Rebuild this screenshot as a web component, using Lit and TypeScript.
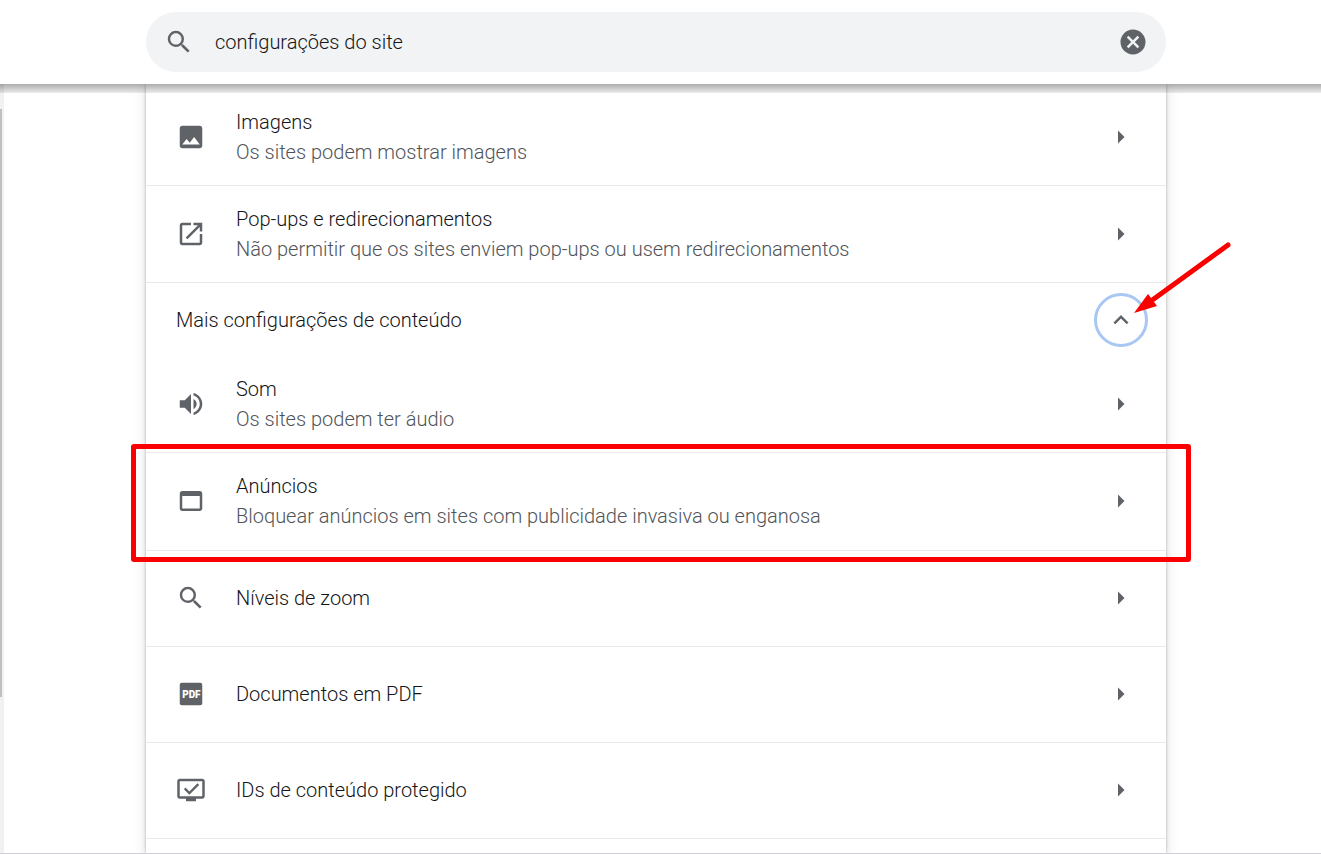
import { LitElement, html, css, svg, nothing } from "lit";
import { customElement, property, state } from "lit/decorators.js";

const ICONS = {
  search: svg`<path d="M15.5 14h-.79l-.28-.27A6.471 6.471 0 0 0 16 9.5 6.5 6.5 0 1 0 9.5 16c1.61 0 3.09-.59 4.23-1.57l.27.28v.79l5 4.99L20.49 19l-4.99-5zm-6 0C7.01 14 5 11.99 5 9.5S7.01 5 9.5 5 14 7.01 14 9.5 11.99 14 9.5 14z"/>`,
  clear: svg`<path d="M12 2a10 10 0 1 0 0 20 10 10 0 0 0 0-20zm5 13.59L15.59 17 12 13.41 8.41 17 7 15.59 10.59 12 7 8.41 8.41 7 12 10.59 15.59 7 17 8.41 13.41 12 17 15.59z"/>`,
  image: svg`<path d="M21 19V5c0-1.1-.9-2-2-2H5c-1.1 0-2 .9-2 2v14c0 1.1.9 2 2 2h14c1.1 0 2-.9 2-2zM8.5 13.5l2.5 3.01L14.5 12l4.5 6H5l3.5-4.5z"/>`,
  popup: svg`<path d="M19 19H5V5h7V3H5c-1.11 0-2 .9-2 2v14c0 1.1.89 2 2 2h14c1.1 0 2-.9 2-2v-7h-2v7zM14 3v2h3.59l-9.83 9.83 1.41 1.41L19 6.41V10h2V3h-7z"/>`,
  sound: svg`<path d="M3 9v6h4l5 5V4L7 9H3zm13.5 3A4.5 4.5 0 0 0 14 7.97v8.05c1.48-.73 2.5-2.25 2.5-4.02zM14 3.23v2.06c2.89.86 5 3.54 5 6.71s-2.11 5.85-5 6.71v2.06c4.01-.91 7-4.49 7-8.77s-2.99-7.86-7-8.77z"/>`,
  ads: svg`<path d="M19 4H5c-1.11 0-2 .9-2 2v12c0 1.1.89 2 2 2h14c1.1 0 2-.9 2-2V6c0-1.1-.89-2-2-2zm0 14H5V8h14v10z"/>`,
  pdf: svg`<rect x="3" y="3" width="18" height="18" rx="1.6"/><text class="pdf" x="12.3" y="14.8" text-anchor="middle">PDF</text>`,
  protected: svg`<path d="M21 3H3c-1.11 0-2 .89-2 2v12c0 1.1.89 2 2 2h5v2h8v-2h5c1.1 0 1.99-.9 1.99-2L23 5c0-1.11-.9-2-2-2zm0 14H3V5h18v12z"/><path d="M17.2 7.6l-6.5 6.5-3.1-3.1-1.3 1.3 4.4 4.4 7.8-7.8z" transform="translate(0 -1)"/>`,
  right: svg`<path d="M9.6 6.8L14.8 12l-5.2 5.2z"/>`,
  up: svg`<path d="M12 8l-6 6 1.41 1.41L12 10.83l4.59 4.58L18 14z"/>`,
};

type IconName = keyof typeof ICONS;

@customElement("cr-glyph")
class CrGlyph extends LitElement {
  @property() name: IconName = "search";

  static styles = css`
    :host {
      display: block;
      flex: none;
      width: 30px;
      height: 30px;
      color: #5f6368;
    }
    .glyph {
      display: block;
      width: 100%;
      height: 100%;
      fill: currentColor;
    }
    .pdf {
      font: 900 8px Roboto, "Liberation Sans", sans-serif;
      fill: #fff;
    }
  `;

  render() {
    return html`<svg class="glyph" viewBox="0 0 24 24" aria-hidden="true">${ICONS[this.name]}</svg>`;
  }
}

interface Setting {
  icon: IconName;
  label: string;
  detail?: string;
  marked?: boolean;
}

const BASIC: Setting[] = [
  { icon: "image", label: "Imagens", detail: "Os sites podem mostrar imagens" },
  {
    icon: "popup",
    label: "Pop-ups e redirecionamentos",
    detail: "Não permitir que os sites enviem pop-ups ou usem redirecionamentos",
  },
];

const MORE: Setting[] = [
  { icon: "sound", label: "Som", detail: "Os sites podem ter áudio" },
  {
    icon: "ads",
    label: "Anúncios",
    detail: "Bloquear anúncios em sites com publicidade invasiva ou enganosa",
    marked: true,
  },
  { icon: "search", label: "Níveis de zoom" },
  { icon: "pdf", label: "Documentos em PDF" },
  { icon: "protected", label: "IDs de conteúdo protegido" },
];

@customElement("app-root")
class AppRoot extends LitElement {
  @state() private expanded = true;
  @state() private query = "configurações do site";

  static styles = css`
    :host {
      display: flex;
      flex-direction: column;
      height: 100vh;
      box-sizing: border-box;
      overflow: hidden;
      border-bottom: 1px solid #d0d0d4;
      background: #fff;
      color: #141517;
      font: 350 20px/30px Roboto, "Liberation Sans", sans-serif;
    }
    * {
      box-sizing: border-box;
    }
    button {
      border: 0;
      padding: 0;
      background: none;
      color: inherit;
      font: inherit;
      text-align: left;
      cursor: pointer;
    }
    .toolbar {
      flex: none;
      padding: 12px 9px 12px 0;
    }
    .search {
      display: flex;
      align-items: center;
      max-width: 1020px;
      height: 60px;
      margin: 0 auto;
      padding: 0 18px;
      border-radius: 30px;
      background: #f1f3f4;
    }
    .query {
      flex: 1;
      min-width: 0;
      margin-left: 21px;
      padding: 0;
      border: 0;
      outline: 0;
      background: none;
      color: inherit;
      font: inherit;
    }
    .content {
      position: relative;
      display: flex;
      flex: 1;
      min-height: 0;
      overflow: hidden;
    }
    .content::before {
      content: "";
      position: absolute;
      z-index: 1;
      inset: 0 0 auto;
      height: 9px;
      background: linear-gradient(rgba(0, 0, 0, 0.32), rgba(0, 0, 0, 0.08));
    }
    .track {
      flex: none;
      width: 4px;
      padding-top: 25px;
      background: #f1f1f1;
    }
    .thumb {
      width: 2px;
      height: 79%;
      max-height: 589px;
      background: #c1c1c1;
    }
    .page {
      flex: 1;
      min-width: 0;
      padding: 0 13px 0 4px;
      margin-left: -4px;
    }
    .card {
      max-width: 1020px;
      min-height: 100%;
      margin: 0 auto;
      padding-top: 4px;
      background: #fff;
      box-shadow: 0 0 3px rgba(60, 64, 67, 0.35), 0 2px 12px rgba(60, 64, 67, 0.16);
    }
    .row {
      position: relative;
      border-top: 1px solid #e9e9ea;
    }
    .row.first {
      border-top-color: transparent;
    }
    .link {
      display: flex;
      align-items: center;
      width: 100%;
      min-height: 95px;
      padding: 0 30px 1px;
    }
    .link.two {
      min-height: 96px;
      padding-bottom: 0;
    }
    .marked .link {
      min-height: 97px;
      padding-bottom: 1px;
    }
    .text {
      display: flex;
      flex: 1;
      flex-direction: column;
      min-width: 0;
      padding: 0 30px;
    }
    .detail {
      color: #505458;
    }
    .more {
      position: relative;
      display: flex;
      align-items: center;
      justify-content: space-between;
      height: 73px;
      padding: 1px 18px 0 30px;
      border-top: 1px solid #e9e9ea;
    }
    .toggle {
      display: grid;
      place-items: center;
      width: 54px;
      height: 54px;
      border: 3px solid #a8c7f3;
      border-radius: 50%;
    }
    .toggle.closed cr-glyph {
      transform: rotate(180deg);
    }
    .mark {
      position: absolute;
      z-index: 2;
      inset: -9px -25px -12px -15px;
      border: 5px solid #fa0000;
      border-radius: 3px;
      pointer-events: none;
    }
    .arrow {
      position: absolute;
      z-index: 2;
      top: -42px;
      right: -66px;
      width: 100px;
      height: 76px;
      fill: #fa0000;
      stroke: #fa0000;
      pointer-events: none;
    }
  `;

  private row(item: Setting, first = false) {
    return html`
      <div class="row ${first ? "first" : ""} ${item.marked ? "marked" : ""}">
        <button class="link ${item.detail ? "two" : ""}">
          <cr-glyph name=${item.icon}></cr-glyph>
          <span class="text">
            <span>${item.label}</span>
            ${item.detail ? html`<span class="detail">${item.detail}</span>` : nothing}
          </span>
          <cr-glyph name="right"></cr-glyph>
        </button>
        ${item.marked ? html`<div class="mark"></div>` : nothing}
      </div>
    `;
  }

  render() {
    return html`
      <header class="toolbar">
        <div class="search">
          <cr-glyph name="search"></cr-glyph>
          <input
            class="query"
            type="text"
            aria-label="Pesquisar nas configurações"
            .value=${this.query}
            @input=${(e: Event) => (this.query = (e.target as HTMLInputElement).value)}
          />
          <button aria-label="Limpar pesquisa" @click=${() => (this.query = "")}>
            <cr-glyph name="clear"></cr-glyph>
          </button>
        </div>
      </header>
      <div class="content">
        <div class="track"><div class="thumb"></div></div>
        <main class="page">
          <section class="card">
            ${BASIC.map((item, i) => this.row(item, i === 0))}
            <div class="more">
              <span>Mais configurações de conteúdo</span>
              <button
                class="toggle ${this.expanded ? "" : "closed"}"
                aria-label="Mais configurações de conteúdo"
                aria-expanded=${this.expanded}
                @click=${() => (this.expanded = !this.expanded)}
              >
                <cr-glyph name="up"></cr-glyph>
              </button>
              <svg class="arrow" viewBox="0 0 100 76" aria-hidden="true">
                <path d="M96 4L19 60" fill="none" stroke-width="5" stroke-linecap="round" />
                <path d="M2 72L16 53L25 65z" stroke="none" />
              </svg>
            </div>
            ${this.expanded ? MORE.map((item, i) => this.row(item, i === 0)) : nothing}
            <div class="row"></div>
          </section>
        </main>
      </div>
    `;
  }
}
